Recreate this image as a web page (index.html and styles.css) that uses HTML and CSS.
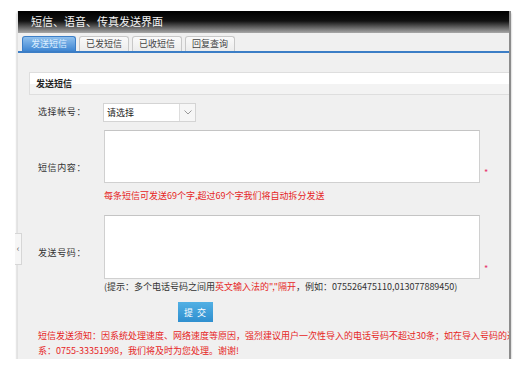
FILE: index.html
```html
<!DOCTYPE html>
<html>
<head>
    <title>短信、语音、传真发送界面</title>
    <link rel="stylesheet" href="styles.css">
</head>
<body>
    <div class="page">
        <div class="titlebar">短信、语音、传真发送界面</div>
        <div class="tabs">
            <div class="tab active">发送短信</div>
            <div class="tab">已发短信</div>
            <div class="tab">已收短信</div>
            <div class="tab">回复查询</div>
        </div>
        <div class="content">
            <div class="section-head">发送短信</div>

            <div class="row row-select">
                <div class="label">选择帐号：</div>
                <div class="select">
                    <span class="select-text">请选择</span>
                    <span class="select-arrow">
                        <svg width="8" height="5" viewBox="0 0 8 5"><path d="M0.5 0.5 L4 4 L7.5 0.5" fill="none" stroke="#999" stroke-width="1"/></svg>
                    </span>
                </div>
            </div>

            <div class="row">
                <div class="label label-area">短信内容：</div>
                <div class="textarea short"></div>
                <span class="star">*</span>
            </div>
            <div class="note red">每条短信可发送69个字,超过69个字我们将自动拆分发送</div>

            <div class="row row-numbers">
                <div class="label label-area">发送号码：</div>
                <div class="textarea tall"></div>
                <span class="star">*</span>
            </div>
            <div class="note hint">(提示：多个电话号码之间用<span class="red">英文输入法的","隔开</span>，例如：075526475110,013077889450)</div>

            <div class="actions">
                <button class="submit">提 交</button>
            </div>

            <div class="notice red">
                <div class="notice-line">短信发送须知：因系统处理速度、网络速度等原因，强烈建议用户一次性导入的电话号码不超过30条；如在导入号码的过程中遇到问题请联</div>
                <div class="notice-line">系：0755-33351998，我们将及时为您处理。谢谢!</div>
            </div>
        </div>
        <div class="handle">‹</div>
    </div>
</body>
</html>
```

FILE: styles.css
```css
* { margin: 0; padding: 0; box-sizing: border-box; }
body { background: #fff; font-family: "Noto Sans CJK SC", "Liberation Sans", sans-serif; font-size: 9px; color: #333; }
.page { position: relative; margin: 11px 0 0 17px; width: 494px; border-right: 2px solid #8c8c8c; border-left: 1px solid #e2e2e2; box-shadow: 0 2px 2px #b0b0b0; }
.titlebar { height: 22px; line-height: 21px; padding-left: 13px; background: linear-gradient(#000 0%, #111 45%, #a8a8a8 100%); color: #f4f4f4; font-size: 11px; }
.tabs { height: 20px; background: #f0f0f0; border-bottom: 2px solid #3c7ec6; display: flex; align-items: flex-end; padding-left: 4px; gap: 3px; }
.tab { height: 15px; line-height: 14px; padding: 0 6px; border: 1px solid #c8c8c8; border-bottom: none; border-radius: 3px 3px 0 0; background: linear-gradient(#fafafa, #ececec); color: #444; font-size: 9px; }
.tab.active { background: linear-gradient(#8fc0ee, #3f86d2); border-color: #3c7ec6; color: #dbeeff; padding: 0 8px; }
.content { background: #f0f0f0; padding: 19px 0 0; overflow: hidden; }
.section-head { margin-left: 11px; height: 23px; line-height: 22px; padding-left: 6px; background: linear-gradient(#fff 50%, #f3f3f3 50%); border: 1px solid #dedede; border-right: none; font-weight: bold; color: #222; }
.row { display: flex; align-items: flex-start; margin-top: 8px; padding-left: 20px; }
.row-numbers { margin-top: 13px; }
.label { width: 66px; line-height: 12px; color: #333; letter-spacing: 0.6px; }
.row-select .label { padding-top: 3px; }
.label-area { padding-top: 32px; }
.select { width: 93px; height: 19px; display: flex; background: #fff; border: 1px solid #d4d4d4; margin-left: -1px; }
.select-text { flex: 1; line-height: 17px; padding-left: 3px; color: #222; }
.select-arrow { width: 16px; border-left: 1px solid #ddd; background: #f6f6f6; display: flex; align-items: center; justify-content: center; }
.textarea { width: 376px; background: #fff; border: 1px solid #d0d0d0; border-top-color: #c4c4c4; }
.textarea.short { height: 53px; }
.textarea.tall { height: 64px; }
.star { color: #e8336a; font-size: 9px; align-self: flex-end; margin: 0 0 4px 4px; }
.note { line-height: 12px; padding-left: 86px; }
.red { color: #e62525; }
.row + .note.red { margin-top: 7px; }
.hint { margin-top: 2px; color: #333; }
.actions { margin-top: 9px; padding-left: 160px; }
.submit { width: 35px; height: 20px; border: none; background: linear-gradient(#52b0e4, #2f8fcf); color: #fff; font-family: inherit; font-size: 9px; letter-spacing: 1px; }
.notice { margin-top: 6px; padding: 0 0 1px 20px; line-height: 15px; white-space: nowrap; overflow: hidden; }
.handle { position: absolute; left: -3px; top: 222px; width: 7px; height: 32px; background: #f6f6f6; border: 1px solid #d6d6d6; border-left: none; color: #666; font-size: 9px; line-height: 30px; text-align: center; }
```
